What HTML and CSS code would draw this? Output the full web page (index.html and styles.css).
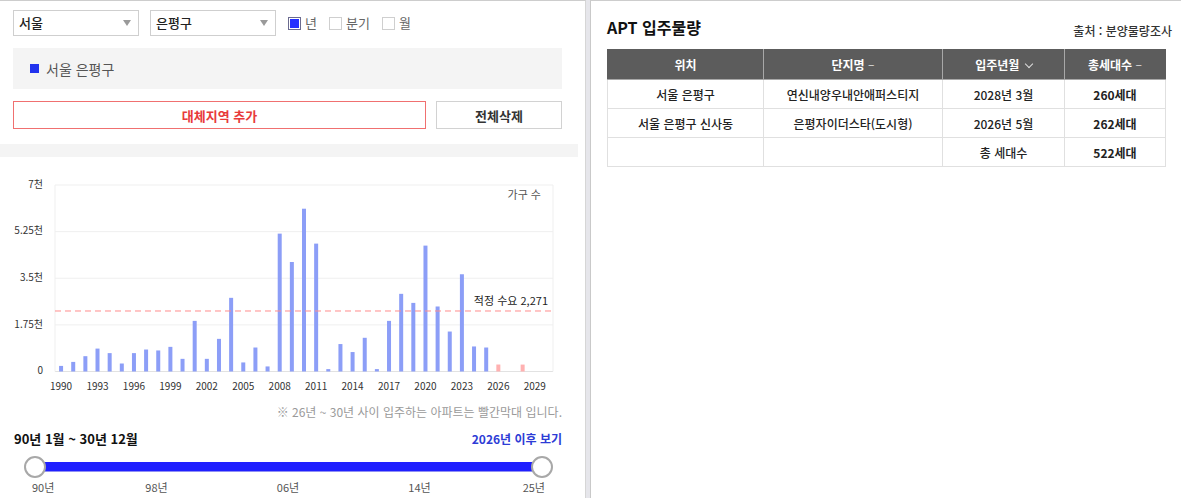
FILE: index.html
```html
<!DOCTYPE html>
<html lang="ko">
<head>
    <meta charset="UTF-8">
    <meta name="viewport" content="width=device-width, initial-scale=1.0">
    <title>APT 입주물량</title>
    <link rel="stylesheet" href="styles.css">
</head>
<body>
    <div class="wrap">
        <div class="left-panel">
            <div class="controls">
                <div class="filter-row">
                    <div class="select-box">서울<span class="caret"></span></div>
                    <div class="select-box">은평구<span class="caret"></span></div>
                    <label class="check checked"><span class="box"></span>년</label>
                    <label class="check"><span class="box"></span>분기</label>
                    <label class="check"><span class="box"></span>월</label>
                </div>
                <div class="legend-box">
                    <span class="legend-mark"></span>서울 은평구
                </div>
                <div class="button-row">
                    <button class="btn-add">대체지역 추가</button>
                    <button class="btn-clear">전체삭제</button>
                </div>
            </div>

            <div class="divider-band"></div>

            <div id="chart" class="chart"></div>

            <div class="chart-bottom">
                <p class="chart-note">※ 26년 ~ 30년 사이 입주하는 아파트는 빨간막대 입니다.</p>
                <div class="range-row">
                    <span class="range-label">90년 1월 ~ 30년 12월</span>
                    <span class="future-link">2026년 이후 보기</span>
                </div>
                <div class="slider">
                    <div class="slider-track"></div>
                    <span class="handle handle-left"></span>
                    <span class="handle handle-right"></span>
                </div>
                <div class="slider-ticks">
                    <span>90년</span>
                    <span>98년</span>
                    <span>06년</span>
                    <span>14년</span>
                    <span>25년</span>
                </div>
            </div>
        </div>

        <div class="right-panel">
            <div class="apt-head">
                <h2>APT 입주물량</h2>
                <span class="apt-source">출처 : 분양물량조사</span>
            </div>
            <table class="apt-table">
                <colgroup>
                    <col style="width: 156px">
                    <col style="width: 179px">
                    <col style="width: 122px">
                    <col style="width: 101px">
                </colgroup>
                <thead>
                    <tr>
                        <th>위치</th>
                        <th>단지명 <span class="sort">–</span></th>
                        <th>입주년월 <span class="sort-down"></span></th>
                        <th>총세대수 <span class="sort">–</span></th>
                    </tr>
                </thead>
                <tbody>
                    <tr>
                        <td>서울 은평구</td>
                        <td>연신내양우내안애퍼스티지</td>
                        <td>2028년 3월</td>
                        <td class="num">260세대</td>
                    </tr>
                    <tr>
                        <td>서울 은평구 신사동</td>
                        <td>은평자이더스타(도시형)</td>
                        <td>2026년 5월</td>
                        <td class="num">262세대</td>
                    </tr>
                    <tr>
                        <td></td>
                        <td></td>
                        <td>총 세대수</td>
                        <td class="num">522세대</td>
                    </tr>
                </tbody>
            </table>
        </div>
    </div>

    <script>
        // 연도별 입주 가구 수 (1990 ~ 2030)
        const supply = [
            210, 360, 575, 860, 690, 300, 690, 825, 790, 925,
            475, 1900, 475, 1225, 2765, 340, 900, 190, 5175, 4110,
            6110, 4800, 90, 1030, 730, 1265, 90, 1900, 2915, 2575,
            4725, 2440, 1500, 3650, 940, 900, 262, 0, 260, 0, 0
        ];
        const startYear = 1990;
        const demand = 2271;

        function drawChart() {
            const W = 578, H = 240;
            const left = 55, right = 553, top = 24, bottom = 210.5;
            const maxV = 7000;
            const band = (right - left) / supply.length;
            const y = v => bottom - v / maxV * (bottom - top);

            let svg = `<svg width="${W}" height="${H}" viewBox="0 0 ${W} ${H}" xmlns="http://www.w3.org/2000/svg">`;

            // 가로 눈금선 + y축 라벨
            const ticks = [[0, '0'], [1750, '1.75천'], [3500, '3.5천'], [5250, '5.25천'], [7000, '7천']];
            ticks.forEach(([v, label]) => {
                const gy = y(v);
                svg += `<line x1="${left}" x2="${right}" y1="${gy}" y2="${gy}" class="${v === 0 ? 'axis' : 'grid'}"/>`;
                svg += `<text x="43" y="${gy}" class="y-label">${label}</text>`;
            });
            svg += `<line x1="${left}" x2="${left}" y1="${top}" y2="${bottom}" class="grid"/>`;
            svg += `<line x1="${right}" x2="${right}" y1="${top}" y2="${bottom}" class="grid"/>`;

            // 막대
            supply.forEach((v, i) => {
                const cx = left + (i + 0.5) * band;
                const year = startYear + i;
                if (v > 0) {
                    const cls = year >= 2026 ? 'bar future' : 'bar';
                    svg += `<rect x="${cx - 2}" y="${y(v)}" width="4" height="${bottom - y(v)}" class="${cls}"/>`;
                }
                if (i % 3 === 0 && year < 2030) {
                    svg += `<text x="${cx}" y="226.5" class="x-label">${year}</text>`;
                }
            });

            // 적정 수요 기준선
            const dy = y(demand);
            svg += `<line x1="${left}" x2="${right}" y1="${dy}" y2="${dy}" class="demand"/>`;
            svg += `<text x="548" y="${dy - 8.5}" class="demand-label">적정 수요 ${demand.toLocaleString()}</text>`;
            svg += `<text x="541" y="35.5" class="unit-label">가구 수</text>`;

            svg += '</svg>';
            document.getElementById('chart').innerHTML = svg;
        }

        drawChart();
    </script>
</body>
</html>
```

FILE: styles.css
```css
/* 기본 */
body {
    margin: 0;
    font-family: "Noto Sans CJK KR", "Noto Sans", sans-serif;
    color: #222;
    background-color: #e6e6eb;
}

.wrap {
    display: flex;
    gap: 4px;
    height: 498px;
}

/* 왼쪽 : 차트 패널 */
.left-panel {
    width: 586px;
    flex-shrink: 0;
    box-sizing: border-box;
    background-color: #fff;
    border-top: 1px solid #cdcdcd;
    border-right: 1px solid #d6d6d6;
}

.controls {
    width: 549px;
    padding: 9px 0 0 13px;
}

.filter-row {
    display: flex;
    align-items: center;
    height: 26px;
}

.select-box {
    width: 126px;
    height: 26px;
    box-sizing: border-box;
    border: 1px solid #cfcfcf;
    margin-right: 11px;
    padding-left: 5px;
    font-size: 13px;
    font-weight: 500;
    line-height: 24px;
    color: #222;
    display: flex;
    justify-content: space-between;
    align-items: center;
}

.select-box:nth-child(2) {
    margin-right: 12px;
}

.caret {
    width: 0;
    height: 0;
    margin-right: 7px;
    border-left: 4px solid transparent;
    border-right: 4px solid transparent;
    border-top: 6px solid #9a9a9a;
}

.check {
    display: flex;
    align-items: center;
    font-size: 13px;
    color: #666;
    margin-right: 12px;
    line-height: 16px;
}

.check .box {
    width: 13px;
    height: 13px;
    box-sizing: border-box;
    border: 1px solid #cfcfcf;
    background-color: #fff;
    margin-right: 4px;
}

.check.checked .box {
    border-color: #6b6b8f;
    background-color: #2530ff;
    box-shadow: inset 0 0 0 1px #fff;
}

.legend-box {
    margin-top: 12px;
    height: 41px;
    background-color: #f4f4f4;
    display: flex;
    align-items: center;
    padding-left: 17px;
    font-size: 14px;
    color: #555;
}

.legend-mark {
    width: 9px;
    height: 9px;
    background-color: #2233ee;
    margin-right: 7px;
}

.button-row {
    display: flex;
    gap: 10px;
    margin-top: 12px;
}

.button-row button {
    height: 28px;
    font-family: inherit;
    font-size: 13px;
    font-weight: 700;
    background-color: #fff;
    cursor: pointer;
    padding: 0;
}

.btn-add {
    width: 413px;
    border: 1px solid #f07070;
    color: #e83a3a;
}

.btn-clear {
    width: 126px;
    border: 1px solid #d2d2d2;
    color: #333;
}

.divider-band {
    width: 578px;
    height: 13px;
    margin-top: 15px;
    background-color: #f4f4f4;
}

/* 차트 */
.chart {
    margin-top: 4px;
    height: 240px;
}

.chart svg {
    display: block;
}

.chart text {
    font-family: "Noto Sans CJK KR", "Noto Sans", sans-serif;
    dominant-baseline: middle;
}

.chart .grid {
    stroke: #efefef;
    stroke-width: 1;
}

.chart .axis {
    stroke: #e2e2e2;
    stroke-width: 1;
}

.chart .bar {
    fill: #8c9ef7;
}

.chart .bar.future {
    fill: #ffb1b1;
}

.chart .demand {
    stroke: #ff8c8c;
    stroke-width: 1;
    stroke-dasharray: 6 4;
}

.chart .y-label {
    font-size: 10px;
    fill: #333;
    text-anchor: end;
}

.chart .x-label {
    font-size: 10px;
    fill: #333;
    text-anchor: middle;
}

.chart .demand-label {
    font-size: 11px;
    fill: #222;
    text-anchor: end;
}

.chart .unit-label {
    font-size: 11px;
    fill: #555;
    text-anchor: end;
}

.chart-bottom {
    width: 549px;
    padding-left: 13px;
}

.chart-note {
    margin: 3px 0 0;
    font-size: 12px;
    line-height: 16px;
    color: #9a9a9a;
    text-align: right;
}

.range-row {
    margin-top: 9px;
    display: flex;
    justify-content: space-between;
    align-items: center;
    line-height: 20px;
}

.range-label {
    font-size: 13px;
    font-weight: 700;
    color: #111;
    padding-left: 1px;
}

.future-link {
    font-size: 12px;
    font-weight: 700;
    color: #2d3cd6;
    cursor: pointer;
}

/* 기간 슬라이더 */
.slider {
    position: relative;
    margin: 7px 20px 0 22px;
    height: 22px;
    display: flex;
    align-items: center;
}

.slider-track {
    width: 100%;
    height: 9px;
    background-color: #1f1fff;
    border-bottom: 1px solid #8f8ff5;
}

.handle {
    position: absolute;
    top: 0;
    width: 22px;
    height: 22px;
    box-sizing: border-box;
    border-radius: 50%;
    border: 2px solid #a8a8a8;
    background-color: #fff;
}

.handle-left {
    left: -11px;
}

.handle-right {
    right: -11px;
}

.slider-ticks {
    margin: 1px 11px 0 12px;
    display: grid;
    grid-template-columns: 1fr 2fr 2fr 2fr 1fr;
    font-size: 11px;
    line-height: 16px;
    color: #555;
}

.slider-ticks span {
    text-align: center;
}

.slider-ticks span:first-child {
    text-align: left;
    padding-left: 7px;
}

.slider-ticks span:last-child {
    text-align: right;
    padding-right: 6px;
}

/* 오른쪽 : 입주물량 표 */
.right-panel {
    flex: 1;
    background-color: #fff;
    border-top: 1px solid #cdcdcd;
    border-left: 1px solid #c9c9c9;
    padding: 0 16px;
}

.apt-head {
    display: flex;
    justify-content: space-between;
    align-items: flex-start;
    height: 48px;
    padding-top: 16px;
    box-sizing: border-box;
    margin-right: -6px;
}

.apt-head h2 {
    margin: 0;
    font-size: 16px;
    line-height: 20px;
    font-weight: 700;
    color: #111;
}

.apt-source {
    padding-top: 6px;
    font-size: 12px;
    line-height: 16px;
    font-weight: 500;
    color: #333;
}

.apt-table {
    width: 558px;
    border-collapse: collapse;
    table-layout: fixed;
    font-size: 12px;
}

.apt-table th {
    height: 29px;
    padding: 0;
    background-color: #5c5c5c;
    color: #fff;
    font-weight: 700;
    border: 1px solid #a8a8a8;
    border-top-color: #5c5c5c;
}

.apt-table th:first-child {
    border-left-color: #5c5c5c;
}

.apt-table th:last-child {
    border-right-color: #5c5c5c;
}

.apt-table td {
    height: 28px;
    padding: 0;
    text-align: center;
    color: #222;
    font-weight: 500;
    border: 1px solid #e0e0e0;
}

.apt-table td.num {
    font-weight: 700;
}

.sort {
    font-weight: 400;
    color: #ddd;
}

.sort-down {
    display: inline-block;
    width: 5px;
    height: 5px;
    border-right: 1px solid #ddd;
    border-bottom: 1px solid #ddd;
    transform: rotate(45deg);
    margin: 0 0 3px 3px;
}
```
